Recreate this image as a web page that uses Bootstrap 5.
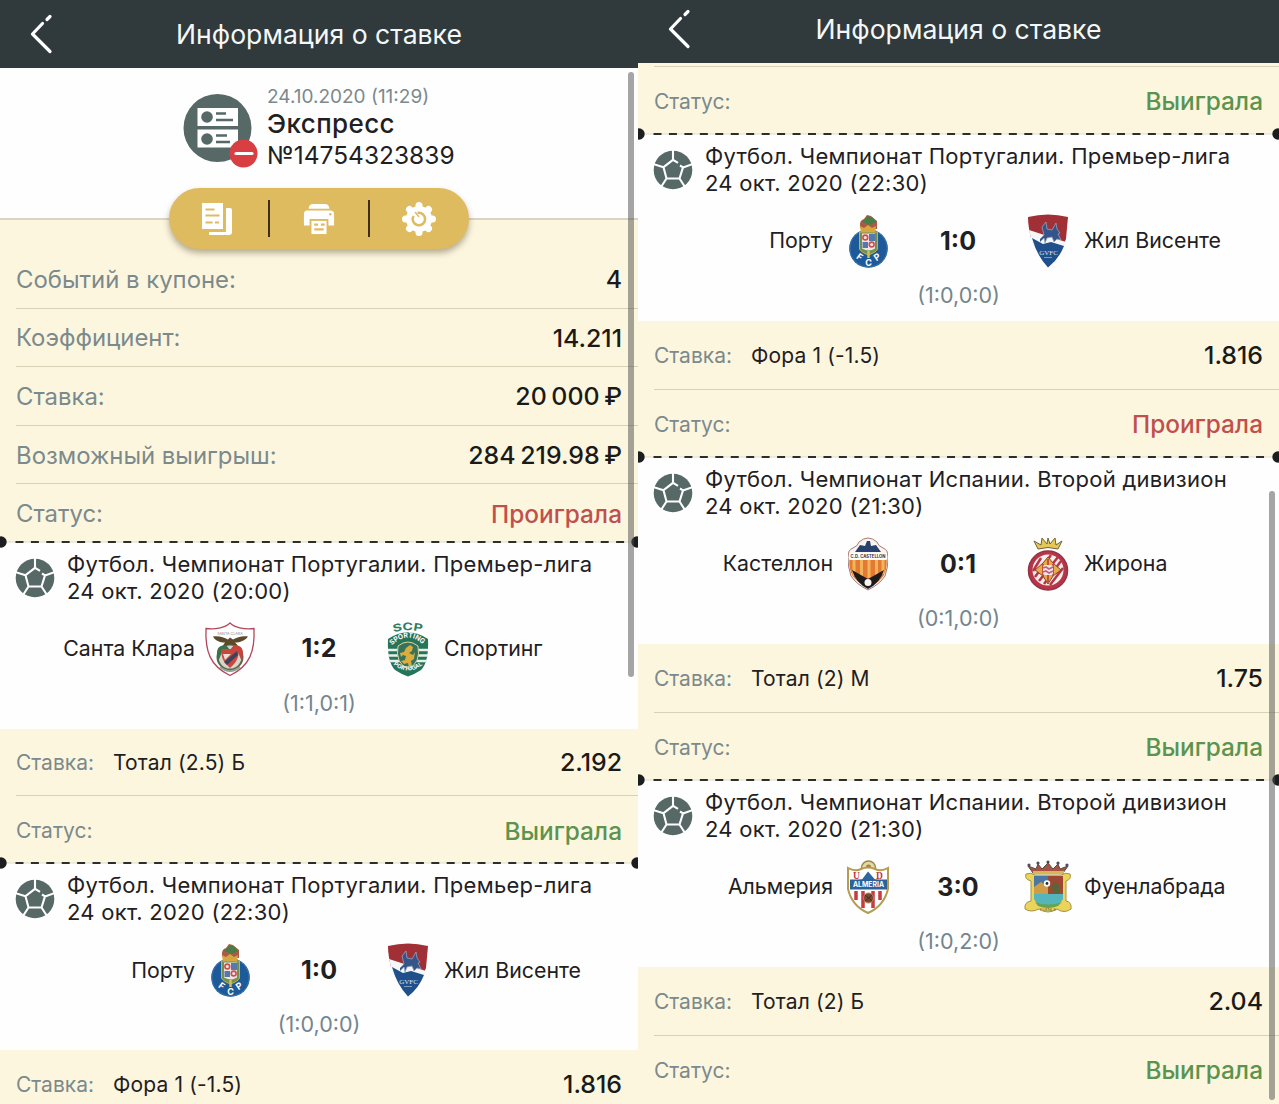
<!DOCTYPE html>
<html lang="ru">
  <head>
    <meta charset="UTF-8" />
    <meta name="viewport" content="width=device-width, initial-scale=1.0" />
    <title>Информация о ставке</title>
    <link
      href="https://cdn.jsdelivr.net/npm/bootstrap@5.3.0/dist/css/bootstrap.min.css"
      rel="stylesheet"
    />
    <style>
      body {
        font-family: Inter, "Liberation Sans", sans-serif;
        color: #1f2022;
        background: #fff;
        height: 1104px;
        overflow: hidden;
      }
      .screen {
        height: 1104px;
        overflow: hidden;
        background: #fdf6df;
        --row-h: 67px;
        --row-last: 67.3px;
        --score-w: 124px;
      }
      .screen-left {
        width: 638px;
      }
      .screen-right {
        width: 641px;
        --row-h: 68.5px;
        --row-last: 67.5px;
        --score-w: 126px;
      }
      .topbar {
        height: 68px;
        background: #303a3c;
        color: #f4f7f7;
        font-size: 26.6px;
        line-height: 1;
      }
      .screen-right .topbar {
        height: 63px;
        padding-bottom: 5px;
      }
      .topbar svg {
        left: 29px;
        top: 14px;
      }
      .screen-right .topbar svg {
        top: 9px;
      }
      .coupon {
        height: 152px;
        background: #fefefe;
        border-bottom: 2px solid #d8d5c8;
        padding: 16px 0 0 183px;
      }
      .coupon-text {
        margin: 1px 0 0 8px;
        white-space: nowrap;
      }
      .coupon-date {
        font-size: 19px;
        line-height: 24px;
        color: #7c898d;
      }
      .coupon-kind {
        font-size: 26px;
        line-height: 30px;
        font-weight: 500;
        letter-spacing: 0.4px;
      }
      .coupon-num {
        font-size: 24.5px;
        line-height: 33px;
      }
      .actions {
        width: 300px;
        height: 61px;
        margin: -32px 0 0 169px;
        border-radius: 31px;
        background: #dfbb60;
        box-shadow: 0 4px 6px rgba(70, 60, 30, 0.4);
      }
      .actions > div {
        width: 100px;
      }
      .actions > div + div::before {
        content: "";
        position: absolute;
        left: -1px;
        top: 12px;
        width: 2px;
        height: 37px;
        background: #3f2e1c;
      }
      .summary {
        padding-top: 1px;
      }
      .line {
        height: 58.6px;
        margin-left: 16px;
        padding: 2px 16px 0 0;
        border-bottom: 1.5px solid #d9d1b5;
        font-size: 23.9px;
      }
      .line:last-child {
        border-bottom: 0;
      }
      .summary .line:last-child {
        height: 57.8px;
      }
      .line-label {
        color: #7b8a8c;
      }
      .line-value {
        font-weight: 500;
        font-size: 24.9px;
        word-spacing: -2px;
        color: #1a1a18;
      }
      .bet-line {
        height: var(--row-h);
        font-size: 21px;
      }
      .bet-line:last-child {
        height: var(--row-last);
      }
      .bet-line .line-label {
        width: 97px;
      }
      .bet-name {
        letter-spacing: 0.15px;
      }
      .won,
      .lost {
        font-size: 24.4px;
      }
      .won {
        color: #5b934f;
      }
      .lost {
        color: #c0504d;
      }
      .top-rule {
        height: 4px;
      }
      .top-status {
        height: 67px;
        border-bottom: 0;
      }
      .event {
        height: 187px;
        background: #fefefe;
        font-size: 22px;
      }
      .cut {
        left: 0;
        top: -6px;
        width: 100%;
        height: 12px;
      }
      .event-head {
        padding: 9px 0 0 15px;
        line-height: 27px;
        letter-spacing: 0.28px;
        white-space: nowrap;
      }
      .event-head svg {
        margin-top: 7px;
        margin-right: 12px;
      }
      .match {
        height: 56px;
        margin-top: 16px;
        white-space: nowrap;
      }
      .home {
        width: 195px;
        margin-right: 8px;
        text-align: right;
      }
      .home,
      .away {
        font-size: 21.3px;
      }
      .away {
        margin-left: 9px;
      }
      .score {
        width: var(--score-w);
        font-size: 25px;
        font-weight: 700;
        text-align: center;
      }
      .screen-right .score {
        padding-top: 2px;
      }
      .halves {
        margin-top: 12px;
        line-height: 29px;
        color: #74858d;
        text-align: center;
        font-size: 21.5px;
      }
      .thumb {
        width: 6px;
        border-radius: 3px;
        background: rgba(75, 75, 75, 0.5);
      }
      .thumb-left {
        left: 628px;
        top: 72px;
        height: 605px;
      }
      .thumb-right {
        left: 631px;
        top: 491px;
        height: 609px;
      }
    </style>
  </head>
  <body>
    <svg class="d-none">
      <symbol id="ball" viewBox="0 0 40 40">
        <circle cx="20" cy="20" r="19.3" fill="#566966" />
        <path
          d="M25 12.800 20 9.800 10.500 17.200 13.500 28.500H26.500L30 17.400 27 15.500M20 0V9.800M10.500 17.200 0 14M30 17.400 40 14M13.500 28.500 8 37M26.500 28.500 32 37"
          fill="none"
          stroke="#fff"
          stroke-width="2.1"
        />
      </symbol>
      <symbol id="back" viewBox="0 0 26 42">
        <path
          d="M21 37.500 3.500 20 13.500 9.500M18 5.500 21 2.500"
          fill="none"
          stroke="#fff"
          stroke-width="3.200"
          stroke-linecap="round"
          stroke-linejoin="round"
        />
      </symbol>
      <symbol id="santa-clara" viewBox="0 0 54 56">
        <path
          d="M27 2C23 6 13 9 3 7.500 2 30 7 45 27 54.500 47 45 52 30 51 7.500 41 9 31 6 27 2Z"
          fill="#fff"
          stroke="#b3475b"
          stroke-width="1.3"
        />
        <text x="27" y="13.500" font-size="3.700" text-anchor="middle" fill="#8d857b">SANTA CLARA</text>
        <circle cx="27" cy="36" r="12.500" fill="#d9d3c8" stroke="#58664f" stroke-width="2" />
        <path d="M14 32c0-6 4-8 9-8l4 5-8 2-4 10Z" fill="#39724b" />
        <path d="M40 32c0-6-4-8-9-8l-4 5 8 2 4 10Z" fill="#c5443b" />
        <path d="M18.500 28h17c1 9-3 14-8.500 19-5.500-5-9.500-10-8.500-19Z" fill="#c9473f" />
        <path d="m21 41 13-11 1 4-11 10Z" fill="#3b4360" />
        <path d="m20 33 8 0-6 6Z" fill="#e9e2d4" />
        <path
          d="M10 15.500c6-1 11 1 15 3l2-2 3 2c4-2 9-4 15-3-3 4-8 6-13 6l3 3-8-1-7 1 2-3c-5 0-10-2-12-6Z"
          fill="#5c4b29"
        />
        <path d="M17 46q10 8 20 0" fill="none" stroke="#8fa292" stroke-width="2" />
      </symbol>
      <symbol id="sporting" viewBox="0 0 54 56">
        <path id="scp-arc" d="M12.500 11.500Q27 7 43 11.500" fill="none" />
        <text font-size="10.500" font-weight="700" fill="#327a61">
          <textPath href="#scp-arc" textLength="29" lengthAdjust="spacingAndGlyphs">SCP</textPath>
        </text>
        <path
          d="M7 18Q27 4.500 47 18q1 23-7 31-6 4-13 6.500Q20 53 14 49 6 41 7 18Z"
          fill="#26745a"
        />
        <path d="M7 29h40M7 34.500h40M8 40h38" stroke="#e6f0e9" stroke-width="2.300" />
        <path d="M17 25q10-8 20 0 3 17-10 23-13-6-10-23Z" fill="#38725a" stroke="#d8d7a0" stroke-width="1" />
        <path
          d="m29 24 3 2-1 4-3 2 4 2 2-3-1 7-3 2 1 5-3 2-1-5-4 1-3-3 4-1 1-4-3-1-2 2-1-4 4-1 2-4Z"
          fill="#d9ad3e"
        />
        <path id="sporting-arc" d="M11 24.500Q27 8.500 43 24.500" fill="none" />
        <text font-size="7" font-weight="700" fill="#fff">
          <textPath href="#sporting-arc" textLength="35" lengthAdjust="spacingAndGlyphs">SPORTING</textPath>
        </text>
        <path id="portugal-arc" d="M12.500 43.500Q27 55.500 42 43.500" fill="none" />
        <text font-size="5.500" font-weight="700" fill="#fff">
          <textPath href="#portugal-arc" textLength="32" lengthAdjust="spacingAndGlyphs">PORTUGAL</textPath>
        </text>
      </symbol>
      <symbol id="porto" viewBox="0 0 54 56">
        <circle cx="27.500" cy="35.500" r="19.300" fill="#1e5a99" />
        <circle cx="27.500" cy="35.500" r="18.500" fill="none" stroke="#3973a9" />
        <path d="M19 15q-1-8 4-9l3-4 4 1 6 5 0 8Z" fill="#a95b45" />
        <path d="m21 9 6-6 5 2 3 4-6 3Z" fill="#497d47" />
        <path d="m19 13 4 2 4-3 4 3 4-2-1 7H20Z" fill="#d8a640" />
        <path d="M18.500 19h18v17q-1 3-9 6-8-3-9-6Z" fill="#70924b" stroke="#c6b04f" />
        <path d="M21 20.500h13v15q-6 4-13 0Z" fill="#f0e5e3" />
        <path d="M28 21h6v7h-6ZM21.500 29H27v6h-5.500Z" fill="#5579ad" />
        <circle cx="24.300" cy="24.500" r="2.400" fill="none" stroke="#cb4e51" stroke-width="1.600" />
        <circle cx="30.700" cy="31.500" r="2.400" fill="none" stroke="#cb4e51" stroke-width="1.600" />
        <path d="M27.500 38v7" stroke="#d3bd58" stroke-width="2.500" />
        <g fill="#fff" font-size="9" font-weight="700" text-anchor="middle">
          <text transform="translate(17 46.500) rotate(35)">F</text>
          <text x="27.500" y="53">C</text>
          <text transform="translate(38 46.500) rotate(-35)">P</text>
        </g>
      </symbol>
      <symbol id="gil" viewBox="0 0 54 56">
        <path d="M7 4Q27-1 47 4L45 26 42 33 10 25Q7 13 7 4Z" fill="#a12f36" />
        <path d="m8 17 37 12-2 6-31-2Z" fill="#f5f6f8" />
        <path d="M11 25 22 31 30 29 43 33Q38 46 27 54.500 16 43 11 25Z" fill="#20508b" />
        <path
          d="m19 26 4-4-2-8 4-5 1 7 5 1 4-7 1 6 3 4-2 1 3 6-4-1-3 3-2-5-5 1-2 5-1-5-4 4"
          fill="#34558a"
          stroke="#93a5bf"
          stroke-width=".8"
        />
        <text x="27.500" y="42" font-size="7" text-anchor="middle" fill="#dce5ef" font-family="Liberation Serif">GVFC</text>
        <path d="M23 44.500h8" stroke="#809cbe" />
      </symbol>
      <symbol id="castellon" viewBox="0 0 54 56">
        <path
          d="M18 6q9-8 18 0 1 4 6 6 6 2 4 9 2 9-2 19-5 8-17 14-12-6-17-14-4-10-2-19-2-7 4-9 5-2 6-6Z"
          fill="#f8f4ef"
          stroke="#a77975"
        />
        <path d="M8.500 24h37q1 8-3 16-6 8-15.500 12-9-4-15.500-12-4-8-3-16Z" fill="#e27a35" />
        <path d="M13 24v16M20.500 24v18M28 24v18M35.500 24v18M42 24v14" stroke="#f2b458" stroke-width="3" />
        <path d="m11 34 16 9 16-9Q39 47 27 53 15 47 11 34Z" fill="#1d1b1c" />
        <path d="m14 16 5-7 5 1 2-5h3l1 5 5-1 5 7Z" fill="#29426d" />
        <path d="M8 17h38v6.500H8Z" fill="#fff" />
        <text
          x="27"
          y="22"
          font-size="4.600"
          font-weight="700"
          text-anchor="middle"
          textLength="35"
          lengthAdjust="spacingAndGlyphs"
          fill="#343037"
        >C.D. CASTELLON</text>
        <circle cx="27" cy="46.500" r="3.500" fill="#f7f3f1" />
      </symbol>
      <symbol id="girona" viewBox="0 0 54 56">
        <path
          d="m17 13-4-8 7 4 1-7 5 6 1-6 2 6 5-6 1 7 6-4-4 8q-10-3-20 0Z"
          fill="#e4c754"
          stroke="#6e6338"
          stroke-width="1"
        />
        <circle cx="27" cy="34.500" r="19.500" fill="#b93448" stroke="#8f3544" stroke-width="1.500" />
        <circle cx="27" cy="34" r="15.500" fill="#f7eee9" />
        <path
          d="m12 35 8-13M14 41l16-22M18 45l19-24M23 48l17-23M29 49l13-17"
          stroke="#b93448"
          stroke-width="2.500"
        />
        <path d="m27 21 5 6 8 7-8 6-5 8-5-8-8-6 8-7Z" fill="#e8aa44" stroke="#8a3d31" />
        <path d="M22 28v12M27 23v23M32 28v12" stroke="#c14838" stroke-width="1.800" />
        <rect x="22" y="29" width="10" height="10" rx="2" fill="#f4e5e2" />
        <path d="m22 32 3-1 3 2 4-2M22 36l3-1 3 2 4-2" fill="none" stroke="#b66387" stroke-width="1.600" />
      </symbol>
      <symbol id="almeria" viewBox="0 0 54 56">
        <circle cx="27.500" cy="9" r="7" fill="#e5d8a0" stroke="#9a894e" stroke-width="1.500" />
        <circle cx="27.500" cy="8" r="2.500" fill="#a47b45" />
        <path
          d="M7 9q7 4 13 1 7-3 14 0 6 3 13-1v21q-4 17-20 24Q11 47 7 30Z"
          fill="#fff"
          stroke="#b49c51"
          stroke-width="2"
        />
        <g font-family="Liberation Serif" font-size="9.500" font-weight="700" fill="#c3343b" text-anchor="middle">
          <text x="15.500" y="19.500">U</text>
          <text x="38.500" y="19.500">D</text>
        </g>
        <path d="m12 21.500 9-1 6-8 7 8 9 1Z" fill="#2e67a0" />
        <path d="M15 32v9M22 32v17M32 32v17M39 32v9" stroke="#c93b40" stroke-width="3.500" />
        <path d="M9 20.500h37v10H9Z" fill="#2f6199" />
        <text
          x="27.500"
          y="28.200"
          font-size="7"
          font-weight="700"
          fill="#fff"
          text-anchor="middle"
          textLength="31"
          lengthAdjust="spacingAndGlyphs"
        >ALMERIA</text>
        <circle cx="27.500" cy="39" r="5" fill="#7d4834" stroke="#b38651" />
        <path d="m24 36 7 6m0-6-7 6" stroke="#422d28" />
      </symbol>
      <symbol id="fuenlabrada" viewBox="0 0 54 56">
        <path
          d="m12 14-5-7 8 3 2-5 4 5 6-6 5 6 5-5 2 5 8-3-5 7Z"
          fill="#a65343"
          stroke="#554a3f"
        />
        <g fill="#554a5a">
          <circle cx="8" cy="6" r="1.600" />
          <circle cx="17" cy="4" r="1.600" />
          <circle cx="27" cy="3" r="1.600" />
          <circle cx="37" cy="4" r="1.600" />
          <circle cx="46" cy="6" r="1.600" />
        </g>
        <path d="M12 12h31v3H12Z" fill="#d9b554" />
        <path
          d="M5 15q5-2 9 1h26q5-3 9-1 2 5-4 7v20q6 1 5 8-7 5-14 0-9 6-18 0-8 4-14 0-1-7 6-8V22q-7-2-5-7Z"
          fill="#ecd45c"
          stroke="#a4923e"
        />
        <path d="M13 17h14v18H13Z" fill="#4c77a3" />
        <path d="M27 17h15v18H27Z" fill="#9d4832" />
        <path d="m13 28 7-5 7 5v7H13Z" fill="#cf9c48" />
        <path d="m31 27 3-4 4 3v8h-6Z" fill="#59663a" />
        <path d="M13 35h29v5q-3 7-15 7-11 0-14-7Z" fill="#54b5bd" />
        <path d="M14 43q13 5 27 0l-4 4q-10 4-20 0Z" fill="#68a44e" />
        <circle cx="26" cy="24.500" r="3.200" fill="#fff" />
        <circle cx="26" cy="24.500" r="1.400" fill="#282c30" />
        <text x="27" y="51.500" font-size="4" text-anchor="middle" fill="#635827">FUENLA</text>
      </symbol>
      <symbol id="dots-left" viewBox="0 0 638 12">
        <path d="M0 6h638" stroke="#dedbce" />
        <path d="M15.500 6H626" stroke="#2d2e2c" stroke-width="2" stroke-dasharray="8 7.400" />
        <circle cx="1" cy="6" r="5.700" fill="#1b1d1e" />
        <circle cx="637" cy="6" r="5.700" fill="#1b1d1e" />
      </symbol>
      <symbol id="dots-right" viewBox="0 0 641 12">
        <path d="M0 6h641" stroke="#dedbce" />
        <path d="M15.500 6H628" stroke="#2d2e2c" stroke-width="2" stroke-dasharray="8 7.450" />
        <circle cx="1" cy="6" r="5.700" fill="#1b1d1e" />
        <circle cx="640" cy="6" r="5.700" fill="#1b1d1e" />
      </symbol>
    </svg>

    <div class="d-flex">
      <section class="screen screen-left position-relative">
        <header class="topbar position-relative d-flex align-items-center justify-content-center">
          <svg class="position-absolute" width="26" height="42"><use href="#back" /></svg>
          <span>Информация о ставке</span>
        </header>

        <div class="coupon d-flex">
          <svg width="76" height="76" viewBox="0 0 76 76" class="mt-2">
            <circle cx="34.500" cy="36" r="34" fill="#566966" />
            <path d="M14.500 16H55v18H14.500ZM14.500 37.500H55V55.500H14.500Z" fill="#fff" />
            <g fill="#566966">
              <circle cx="24" cy="25" r="5.800" />
              <circle cx="24" cy="47" r="5.800" />
            </g>
            <path d="M33 21.500h10M33 28h17M33 43.500h11M33 50h14" stroke="#566966" stroke-width="2.600" />
            <circle cx="60.500" cy="61.500" r="14" fill="#d93e42" />
            <path d="M53 61.500h16" stroke="#fff" stroke-width="3.200" stroke-linecap="round" />
          </svg>
          <div class="coupon-text">
            <div class="coupon-date">24.10.2020 (11:29)</div>
            <div class="coupon-kind">Экспресс</div>
            <div class="coupon-num">№14754323839</div>
          </div>
        </div>

        <div class="actions position-relative d-flex">
          <div class="position-relative d-flex align-items-center justify-content-center">
            <svg width="32" height="34" viewBox="0 0 32 34" class="me-1">
              <path d="M1 1h21v26H1ZM25 6h4q2 0 2 2v22q0 3-3 3H8v-3h17Z" fill="#fff" />
              <path d="M4.500 7.500h9M4.500 13.500h14M4.500 20.500h7M14 20.500h4" stroke="#dfbb60" stroke-width="2.200" />
            </svg>
          </div>
          <div class="position-relative d-flex align-items-center justify-content-center">
            <svg width="34" height="32" viewBox="0 0 34 34">
              <path d="M6 6q0-5 5-5h12q5 0 5 5ZM4 8h25q4 0 4 4v12h-6v-7H7v7H1V12q0-4 3-4Z" fill="#fff" />
              <path d="M9 19h16v14H9Z" fill="#fff" />
              <path d="M12 23h4M19 23h4M12 28h10" stroke="#dfbb60" stroke-width="2.300" />
              <circle cx="29" cy="12" r="1.300" fill="#dfbb60" />
            </svg>
          </div>
          <div class="position-relative d-flex align-items-center justify-content-center">
            <svg width="36" height="36" viewBox="0 0 36 36">
              <circle cx="18" cy="18" r="13" fill="#fff" />
              <path
                d="M18 4.500v27M4.500 18h27M8.500 8.500l19 19M27.500 8.500l-19 19"
                stroke="#fff"
                stroke-width="7"
                stroke-linecap="round"
              />
              <path d="M16.500 12a6.200 6.200 0 1 1-4 3" fill="none" stroke="#dfbb60" stroke-width="2.500" />
              <path d="m14 11 4 5" stroke="#dfbb60" stroke-width="1.300" />
            </svg>
          </div>
        </div>

        <div class="summary">
          <div class="line d-flex align-items-center justify-content-between">
            <span class="line-label">Событий в купоне:</span><span class="line-value">4</span>
          </div>
          <div class="line d-flex align-items-center justify-content-between">
            <span class="line-label">Коэффициент:</span><span class="line-value">14.211</span>
          </div>
          <div class="line d-flex align-items-center justify-content-between">
            <span class="line-label">Ставка:</span><span class="line-value">20 000 ₽</span>
          </div>
          <div class="line d-flex align-items-center justify-content-between">
            <span class="line-label">Возможный выигрыш:</span><span class="line-value">284 219.98 ₽</span>
          </div>
          <div class="line d-flex align-items-center justify-content-between">
            <span class="line-label">Статус:</span><span class="line-value lost">Проиграла</span>
          </div>
        </div>

        <article>
          <div class="event position-relative">
            <svg class="cut position-absolute"><use href="#dots-left" /></svg>
            <div class="event-head d-flex">
              <svg width="40" height="40"><use href="#ball" /></svg>
              <div>Футбол. Чемпионат Португалии. Премьер-лига<br />24 окт. 2020 (20:00)</div>
            </div>
            <div class="match d-flex align-items-center">
              <div class="home">Санта Клара</div>
              <svg width="54" height="56"><use href="#santa-clara" /></svg>
              <div class="score">1:2</div>
              <svg width="54" height="56"><use href="#sporting" /></svg>
              <div class="away">Спортинг</div>
            </div>
            <div class="halves">(1:1,0:1)</div>
          </div>
          <div class="line bet-line d-flex align-items-center">
            <span class="line-label">Ставка:</span><span class="bet-name">Тотал (2.5) Б</span>
            <span class="line-value ms-auto">2.192</span>
          </div>
          <div class="line bet-line d-flex align-items-center">
            <span class="line-label">Статус:</span><span class="line-value won ms-auto">Выиграла</span>
          </div>
        </article>

        <article>
          <div class="event position-relative">
            <svg class="cut position-absolute"><use href="#dots-left" /></svg>
            <div class="event-head d-flex">
              <svg width="40" height="40"><use href="#ball" /></svg>
              <div>Футбол. Чемпионат Португалии. Премьер-лига<br />24 окт. 2020 (22:30)</div>
            </div>
            <div class="match d-flex align-items-center">
              <div class="home">Порту</div>
              <svg width="54" height="56"><use href="#porto" /></svg>
              <div class="score">1:0</div>
              <svg width="54" height="56"><use href="#gil" /></svg>
              <div class="away">Жил Висенте</div>
            </div>
            <div class="halves">(1:0,0:0)</div>
          </div>
          <div class="line bet-line d-flex align-items-center">
            <span class="line-label">Ставка:</span><span class="bet-name">Фора 1 (-1.5)</span>
            <span class="line-value ms-auto">1.816</span>
          </div>
        </article>
        <div class="thumb thumb-left position-absolute"></div>
      </section>

      <section class="screen screen-right position-relative">
        <header class="topbar position-relative d-flex align-items-center justify-content-center">
          <svg class="position-absolute" width="26" height="42"><use href="#back" /></svg>
          <span>Информация о ставке</span>
        </header>
        <div class="line top-rule"></div>
        <div class="line bet-line top-status d-flex align-items-center">
          <span class="line-label">Статус:</span><span class="line-value won ms-auto">Выиграла</span>
        </div>

        <article>
          <div class="event position-relative">
            <svg class="cut position-absolute"><use href="#dots-right" /></svg>
            <div class="event-head d-flex">
              <svg width="40" height="40"><use href="#ball" /></svg>
              <div>Футбол. Чемпионат Португалии. Премьер-лига<br />24 окт. 2020 (22:30)</div>
            </div>
            <div class="match d-flex align-items-center">
              <div class="home">Порту</div>
              <svg width="54" height="56"><use href="#porto" /></svg>
              <div class="score">1:0</div>
              <svg width="54" height="56"><use href="#gil" /></svg>
              <div class="away">Жил Висенте</div>
            </div>
            <div class="halves">(1:0,0:0)</div>
          </div>
          <div class="line bet-line d-flex align-items-center">
            <span class="line-label">Ставка:</span><span class="bet-name">Фора 1 (-1.5)</span>
            <span class="line-value ms-auto">1.816</span>
          </div>
          <div class="line bet-line d-flex align-items-center">
            <span class="line-label">Статус:</span><span class="line-value lost ms-auto">Проиграла</span>
          </div>
        </article>

        <article>
          <div class="event position-relative">
            <svg class="cut position-absolute"><use href="#dots-right" /></svg>
            <div class="event-head d-flex">
              <svg width="40" height="40"><use href="#ball" /></svg>
              <div>Футбол. Чемпионат Испании. Второй дивизион<br />24 окт. 2020 (21:30)</div>
            </div>
            <div class="match d-flex align-items-center">
              <div class="home">Кастеллон</div>
              <svg width="54" height="56"><use href="#castellon" /></svg>
              <div class="score">0:1</div>
              <svg width="54" height="56"><use href="#girona" /></svg>
              <div class="away">Жирона</div>
            </div>
            <div class="halves">(0:1,0:0)</div>
          </div>
          <div class="line bet-line d-flex align-items-center">
            <span class="line-label">Ставка:</span><span class="bet-name">Тотал (2) М</span>
            <span class="line-value ms-auto">1.75</span>
          </div>
          <div class="line bet-line d-flex align-items-center">
            <span class="line-label">Статус:</span><span class="line-value won ms-auto">Выиграла</span>
          </div>
        </article>

        <article>
          <div class="event position-relative">
            <svg class="cut position-absolute"><use href="#dots-right" /></svg>
            <div class="event-head d-flex">
              <svg width="40" height="40"><use href="#ball" /></svg>
              <div>Футбол. Чемпионат Испании. Второй дивизион<br />24 окт. 2020 (21:30)</div>
            </div>
            <div class="match d-flex align-items-center">
              <div class="home">Альмерия</div>
              <svg width="54" height="56"><use href="#almeria" /></svg>
              <div class="score">3:0</div>
              <svg width="54" height="56"><use href="#fuenlabrada" /></svg>
              <div class="away">Фуенлабрада</div>
            </div>
            <div class="halves">(1:0,2:0)</div>
          </div>
          <div class="line bet-line d-flex align-items-center">
            <span class="line-label">Ставка:</span><span class="bet-name">Тотал (2) Б</span>
            <span class="line-value ms-auto">2.04</span>
          </div>
          <div class="line bet-line d-flex align-items-center">
            <span class="line-label">Статус:</span><span class="line-value won ms-auto">Выиграла</span>
          </div>
        </article>
        <div class="thumb thumb-right position-absolute"></div>
      </section>
    </div>
    <script src="https://cdn.jsdelivr.net/npm/bootstrap@5.3.0/dist/js/bootstrap.bundle.min.js"></script>
  </body>
</html>
